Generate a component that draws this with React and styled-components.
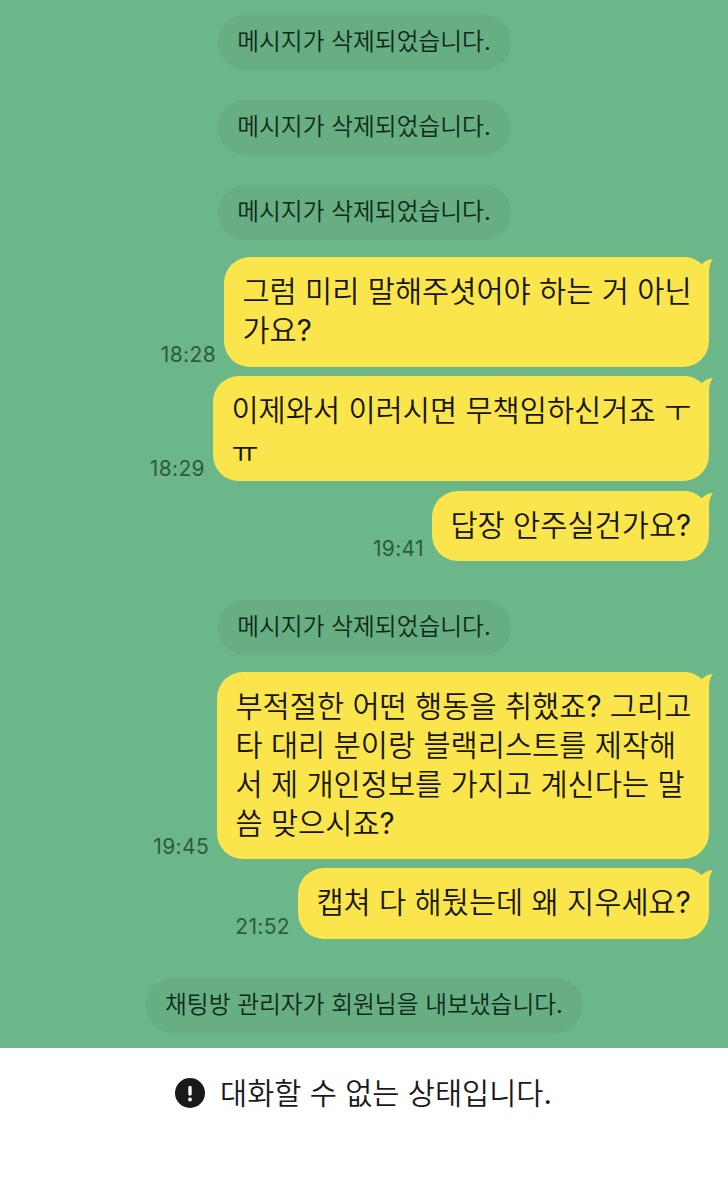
import React from "react";
import styled, { createGlobalStyle } from "styled-components";

const GlobalStyle = createGlobalStyle`
  html, body { margin: 0; padding: 0; background: #fff; }
  body { font-family: Inter, "Noto Sans CJK KR DemiLight", "Noto Sans CJK KR", sans-serif; font-weight: 380; }
`;

const Screen = styled.main`
  display: flex;
  flex-direction: column;
  width: 728px;
  height: 1200px;
  overflow: hidden;
  background: #fff;
`;

const Chat = styled.section`
  display: flex;
  flex-direction: column;
  box-sizing: border-box;
  height: 1048px;
  padding: 15px 19px 15px 0;
  background: #6cb78a;
`;

const Notice = styled.div`
  display: flex;
  justify-content: center;
  align-self: center;
  box-sizing: border-box;
  width: ${(p) => (p.$wide ? 437 : 293)}px;
  height: 55px;
  margin: ${(p) => p.$top || 0}px -19px 0 0;
  border-radius: 27px;
  background: #67ae83;
  color: #10291a;
  font-size: 23.7px;
  line-height: 53px;
  letter-spacing: 0.03px;
  white-space: nowrap;
`;

const MessageRow = styled.div`
  display: flex;
  justify-content: flex-end;
  align-items: flex-end;
  gap: 9px;
  margin-top: ${(p) => p.$top}px;
`;

const Time = styled.time`
  color: #2c5c40;
  font-size: 21px;
  font-weight: 400;
  line-height: 24px;
  letter-spacing: 0.35px;
  margin-right: -1px;
`;

const Bubble = styled.div`
  position: relative;
  isolation: isolate;
  display: flex;
  flex-direction: column;
  box-sizing: border-box;
  width: ${(p) => p.$width}px;
  height: ${(p) => p.$height}px;
  padding: 15px 0 0 18.4px;
  border-radius: 26px;
  background: #fae64c;
  color: #17150a;
`;

const Line = styled.span`
  height: ${(p) => p.$height}px;
  font-size: 29.5px;
  line-height: 39px;
  letter-spacing: 0.03px;
  white-space: nowrap;
`;

const Tail = styled.svg`
  position: absolute;
  z-index: -1;
  top: 0;
  right: -4px;
  width: 30px;
  height: 30px;
`;

const Footer = styled.footer`
  display: flex;
  align-items: center;
  justify-content: center;
  gap: 15px;
  height: 90px;
  padding-right: 1px;
  color: #19191b;
  font-size: 29.5px;
  line-height: 40px;
  white-space: nowrap;
`;

const Alert = styled.svg`
  width: 30px;
  height: 30px;
`;

const deleted = "메시지가 삭제되었습니다.";

function Message({ top, time, width, height, lines, lineHeight = 39 }) {
  return (
    <MessageRow $top={top}>
      <Time>{time}</Time>
      <Bubble $width={width} $height={height}>
        <Tail viewBox="0 0 30 30" aria-hidden="true">
          <path d="M0 0C8 0 14 2.500 18.700 7.300C22 4 25.500 2.200 29.700 2C27 6 26 10 26 17V28L0 20Z" fill="#fae64c" />
        </Tail>
        {lines.map((line) => (
          <Line key={line} $height={lineHeight}>{line}</Line>
        ))}
      </Bubble>
    </MessageRow>
  );
}

export default function App() {
  return (
    <Screen>
      <GlobalStyle />
      <Chat>
        <Notice>{deleted}</Notice>
        <Notice $top={30}>{deleted}</Notice>
        <Notice $top={30}>{deleted}</Notice>
        <Message top={17} time="18:28" width={485} height={109.6} lines={["그럼 미리 말해주셧어야 하는 거 아닌", "가요?"]} />
        <Message top={9.4} time="18:29" width={496} height={105} lineHeight={41} lines={["이제와서 이러시면 무책임하신거죠 ㅜ", "ㅠ"]} />
        <Message top={10} time="19:41" width={277} height={70} lines={["답장 안주실건가요?"]} />
        <Notice $top={39}>{deleted}</Notice>
        <Message
          top={17}
          time="19:45"
          width={492}
          height={187}
          lines={["부적절한 어떤 행동을 취했죠? 그리고", "타 대리 분이랑 블랙리스트를 제작해", "서 제 개인정보를 가지고 계신다는 말", "씀 맞으시죠?"]}
        />
        <Message top={9.4} time="21:52" width={411} height={70.4} lines={["캡쳐 다 해뒀는데 왜 지우세요?"]} />
        <Notice $top={39.2} $wide>채팅방 관리자가 회원님을 내보냈습니다.</Notice>
      </Chat>
      <Footer>
        <Alert viewBox="0 0 30 30" aria-hidden="true">
          <circle cx="15" cy="15" r="15" fill="#19191b" />
          <path d="M15 9.500V16" stroke="#fff" strokeWidth="3.400" strokeLinecap="round" />
          <circle cx="15" cy="21.500" r="1.900" fill="#fff" />
        </Alert>
        <span>대화할 수 없는 상태입니다.</span>
      </Footer>
    </Screen>
  );
}
